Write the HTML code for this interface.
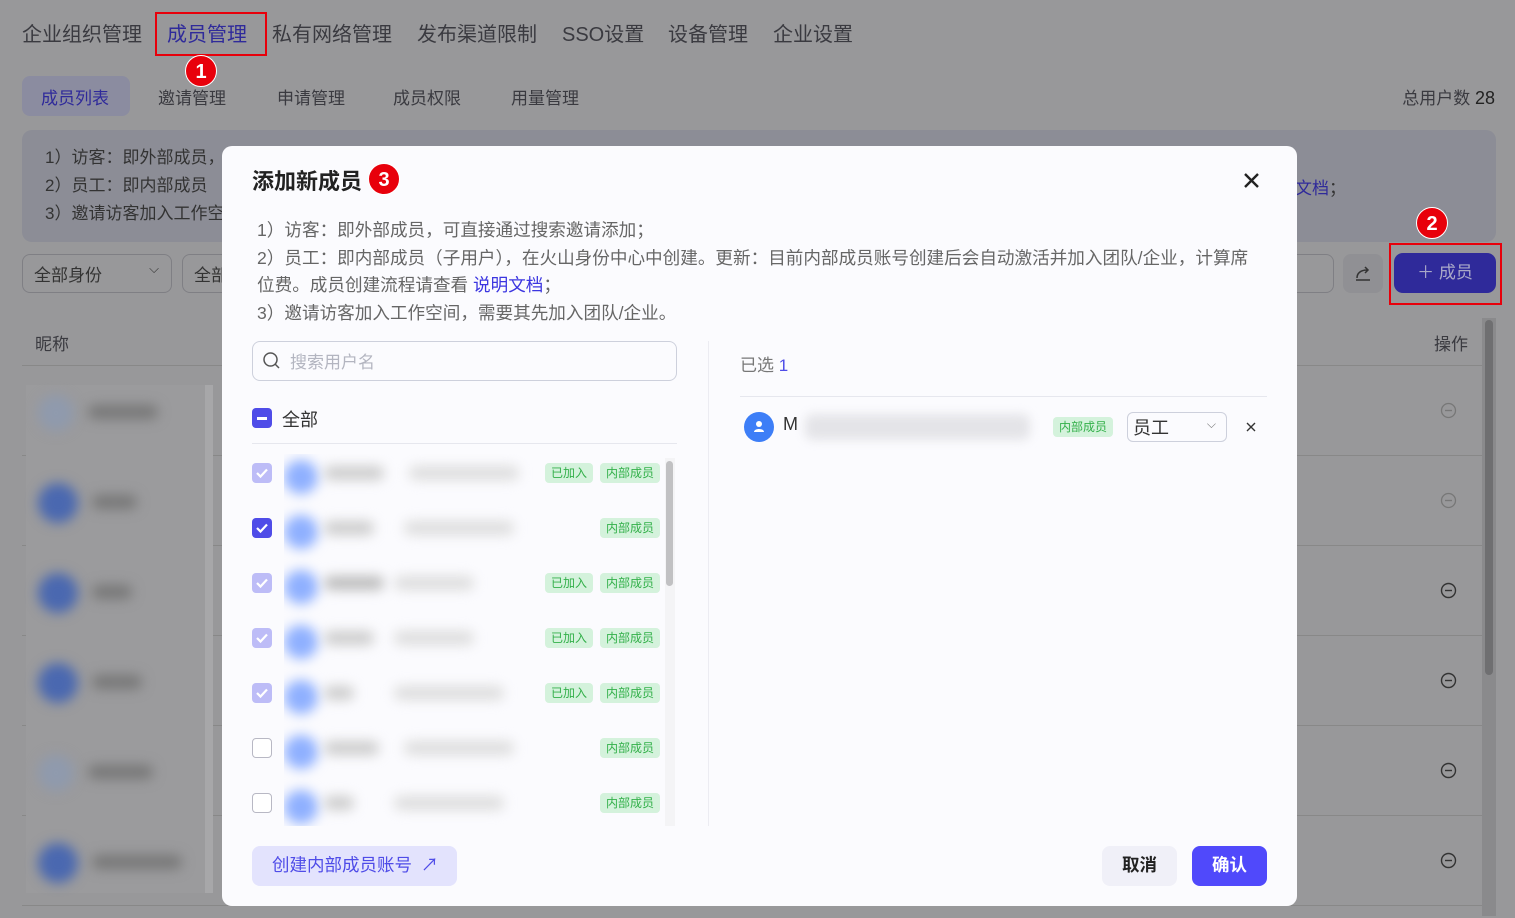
<!DOCTYPE html>
<html><head><meta charset="utf-8"><style>
*{box-sizing:border-box;margin:0;padding:0}
html,body{width:1515px;height:918px;overflow:hidden}
body{background:#98989a;font-family:"Liberation Sans","Noto Sans CJK SC",sans-serif;position:relative;color:#333}
.a{position:absolute;white-space:nowrap}
.nav{top:18px;font-size:20px;color:#3a3a40}
.sub{top:84px;font-size:17px;color:#3a3a40}
.badge{position:absolute;width:32px;height:32px;border-radius:50%;background:#e8000b;color:#fff;font-weight:bold;font-size:20px;text-align:center;line-height:32px;border:1px solid #fff}
.row{position:absolute;left:22px;width:1460px;height:90px;border-top:1px solid #888}
.blob{position:absolute;border-radius:50%;filter:blur(6px)}
.bar{position:absolute;border-radius:8px;filter:blur(6px);background:#777}
.cb{position:absolute;left:252px;width:20px;height:20px;border-radius:4px;background:#bdbcf7}
.cb svg{position:absolute;left:3px;top:4px}
.tag{position:absolute;height:20px;line-height:20px;font-size:12px;color:#33b04a;background:#d4f2dc;border-radius:4px;padding:0 6px}
.desc{left:257px;font-size:17.6px;color:#666}
</style></head><body>
<div class="a nav" style="left:22px">企业组织管理</div>
<div class="a nav" style="left:167px;color:#2f2a9a">成员管理</div>
<div class="a nav" style="left:272px">私有网络管理</div>
<div class="a nav" style="left:417px">发布渠道限制</div>
<div class="a nav" style="left:562px">SSO设置</div>
<div class="a nav" style="left:668px">设备管理</div>
<div class="a nav" style="left:773px">企业设置</div>
<div class="a" style="left:155px;top:12px;width:112px;height:44px;border:2px solid #e8000b"></div>
<div class="badge" style="left:185px;top:55px">1</div>
<div class="a" style="left:22px;top:76px;width:108px;height:40px;border-radius:8px;background:#8b8ca0"></div>
<div class="a sub" style="left:41px;color:#2f2a9a">成员列表</div>
<div class="a sub" style="left:158px">邀请管理</div>
<div class="a sub" style="left:277px">申请管理</div>
<div class="a sub" style="left:393px">成员权限</div>
<div class="a sub" style="left:511px">用量管理</div>
<div class="a" style="right:20px;top:84px;font-size:17px;color:#3a3a40">总用户数 <b style="font-weight:normal;color:#222;font-size:18px">28</b></div>
<div class="a" style="left:22px;top:130px;width:1474px;height:112px;border-radius:10px;background:#8c8d96"></div>
<div class="a" style="left:45px;top:144px;font-size:17px;color:#333;line-height:28px">1）访客：即外部成员，<br>2）员工：即内部成员<br>3）邀请访客加入工作空</div>
<div class="a" style="left:1295px;top:174px;font-size:17px;color:#2f2a9a">文档<span style="color:#333">；</span></div>
<div class="a" style="left:22px;top:254px;width:150px;height:39px;border:1px solid #7f7f84;border-radius:8px;font-size:17px;color:#333;padding:6px 11px">全部身份<span style="position:absolute;right:12px;top:6px;font-size:13px">⌵</span></div>
<div class="a" style="left:182px;top:254px;width:60px;height:39px;border:1px solid #7f7f84;border-radius:8px;font-size:17px;padding:6px 11px">全部</div>
<div class="a" style="left:1280px;top:254px;width:54px;height:39px;border:1px solid #7f7f84;border-radius:8px"></div>
<div class="a" style="left:1343px;top:254px;width:40px;height:39px;border-radius:8px;background:#909094"><svg width="40" height="39"><path d="M13 26h14M14 24c0-5 4-8 10-8M22 13l3 3-3 3" stroke="#333" stroke-width="1.5" fill="none"/></svg></div>
<div class="a" style="left:1394px;top:253px;width:102px;height:40px;border-radius:9px;background:#2f2a9a;color:#a9a8c8;font-size:17px;text-align:center;line-height:40px">＋ 成员</div>
<div class="a" style="left:1389px;top:243px;width:113px;height:62px;border:2px solid #e8000b"></div>
<div class="badge" style="left:1416px;top:207px">2</div>
<div class="a" style="left:35px;top:330px;font-size:17px;color:#3a3a40">昵称</div>
<div class="a" style="left:1434px;top:330px;font-size:17px;color:#3a3a40">操作</div>
<div class="row" style="top:365px"></div><div class="row" style="top:455px"></div><div class="row" style="top:545px"></div><div class="row" style="top:635px"></div><div class="row" style="top:725px"></div><div class="row" style="top:815px"></div><div class="row" style="top:905px;height:13px"></div>
<div class="a" style="left:26px;top:385px;width:186px;height:508px;background:#9b9b9d"></div>
<div class="a" style="left:205px;top:385px;width:8px;height:508px;background:#a7a7a9"></div>
<div class="blob" style="left:38px;top:395px;width:36px;height:36px;background:#8f9aad"></div><div class="bar" style="left:88px;top:405px;width:70px;height:14px"></div>
<div class="blob" style="left:38px;top:483px;width:40px;height:40px;background:#4a68b0"></div><div class="bar" style="left:92px;top:495px;width:45px;height:14px"></div>
<div class="blob" style="left:38px;top:573px;width:40px;height:40px;background:#4a68b0"></div><div class="bar" style="left:92px;top:585px;width:40px;height:14px"></div>
<div class="blob" style="left:38px;top:663px;width:40px;height:40px;background:#4a68b0"></div><div class="bar" style="left:92px;top:675px;width:50px;height:14px"></div>
<div class="blob" style="left:38px;top:755px;width:36px;height:36px;background:#8f9aad"></div><div class="bar" style="left:88px;top:765px;width:65px;height:14px"></div>
<div class="blob" style="left:38px;top:843px;width:40px;height:40px;background:#4a68b0"></div><div class="bar" style="left:92px;top:855px;width:90px;height:14px"></div>
<svg class="a" style="left:1440px;top:402px" width="17" height="480"><g fill="none" stroke="#777" stroke-width="1.3"><circle cx="8.5" cy="8.5" r="7"/><path d="M5 8.5h7"/><circle cx="8.5" cy="98.5" r="7"/><path d="M5 98.5h7"/></g><g fill="none" stroke="#333" stroke-width="1.4"><circle cx="8.5" cy="188.5" r="7"/><path d="M5 188.5h7"/><circle cx="8.5" cy="278.5" r="7"/><path d="M5 278.5h7"/><circle cx="8.5" cy="368.5" r="7"/><path d="M5 368.5h7"/><circle cx="8.5" cy="458.5" r="7"/><path d="M5 458.5h7"/></g></svg>
<div class="a" style="left:1482px;top:318px;width:14px;height:598px;background:#8a8a8c"></div>
<div class="a" style="left:1485px;top:320px;width:8px;height:355px;border-radius:4px;background:#6f6f71"></div>

<div class="a" style="left:222px;top:146px;width:1075px;height:760px;border-radius:10px;background:#fbfbfe"></div>
<div class="a" style="left:252px;top:164px;font-size:22px;font-weight:bold;color:#222">添加新成员</div>
<div class="badge" style="left:368px;top:163px">3</div>
<svg class="a" style="left:1243px;top:172px" width="17" height="17"><path d="M2 2L15 15M15 2L2 15" stroke="#222" stroke-width="2.4"/></svg>
<div class="a desc" style="top:217px">1）访客：即外部成员，可直接通过搜索邀请添加；</div>
<div class="a desc" style="top:245px">2）员工：即内部成员（子用户），在火山身份中心中创建。更新：目前内部成员账号创建后会自动激活并加入团队/企业，计算席</div>
<div class="a desc" style="top:272px">位费。成员创建流程请查看 <span style="color:#3b35e0">说明文档</span>；</div>
<div class="a desc" style="top:300px">3）邀请访客加入工作空间，需要其先加入团队/企业。</div>
<div class="a" style="left:252px;top:341px;width:425px;height:40px;border:1px solid #cdd0dc;border-radius:8px"></div>
<svg class="a" style="left:262px;top:351px" width="20" height="20"><circle cx="8.5" cy="8.5" r="6.5" stroke="#555" stroke-width="1.5" fill="none"/><path d="M13 13l4 4" stroke="#555" stroke-width="1.5"/></svg>
<div class="a" style="left:290px;top:348px;font-size:17px;color:#b3b5c0">搜索用户名</div>
<div class="a" style="left:252px;top:408px;width:20px;height:20px;border-radius:4px;background:#4f4ce8"><div style="position:absolute;left:5px;top:9px;width:10px;height:2.5px;background:#fff"></div></div>
<div class="a" style="left:282px;top:406px;font-size:18px;color:#333">全部</div>
<div class="a" style="left:252px;top:443px;width:425px;height:1px;background:#e6e7ee"></div>
<div class="a" style="left:708px;top:341px;width:1px;height:485px;background:#ececf2"></div>
<div class="a" style="left:665px;top:458px;width:10px;height:368px;background:#f4f4f6"></div>
<div class="a" style="left:666px;top:461px;width:7px;height:125px;border-radius:4px;background:#c1c1c3"></div>
<div class="a" style="left:284px;top:454px;width:250px;height:372px;overflow:hidden">
 <div class="blob" style="left:0px;top:6px;width:34px;height:34px;background:#8fb0ff"></div><div class="bar" style="left:40px;top:12px;width:60px;height:14px;background:#ccc"></div><div class="bar" style="left:125px;top:12px;width:110px;height:14px;background:#ddd"></div>
 <div class="blob" style="left:0px;top:61px;width:34px;height:34px;background:#8fb0ff"></div><div class="bar" style="left:40px;top:67px;width:50px;height:14px;background:#ccc"></div><div class="bar" style="left:120px;top:67px;width:110px;height:14px;background:#ddd"></div>
 <div class="blob" style="left:0px;top:116px;width:34px;height:34px;background:#8fb0ff"></div><div class="bar" style="left:40px;top:122px;width:60px;height:14px;background:#bbb"></div><div class="bar" style="left:110px;top:122px;width:80px;height:14px;background:#ddd"></div>
 <div class="blob" style="left:0px;top:171px;width:34px;height:34px;background:#8fb0ff"></div><div class="bar" style="left:40px;top:177px;width:50px;height:14px;background:#ccc"></div><div class="bar" style="left:110px;top:177px;width:80px;height:14px;background:#ddd"></div>
 <div class="blob" style="left:0px;top:226px;width:34px;height:34px;background:#8fb0ff"></div><div class="bar" style="left:40px;top:232px;width:30px;height:14px;background:#ccc"></div><div class="bar" style="left:110px;top:232px;width:110px;height:14px;background:#ddd"></div>
 <div class="blob" style="left:0px;top:281px;width:34px;height:34px;background:#8fb0ff"></div><div class="bar" style="left:40px;top:287px;width:55px;height:14px;background:#ccc"></div><div class="bar" style="left:120px;top:287px;width:110px;height:14px;background:#ddd"></div>
 <div class="blob" style="left:0px;top:336px;width:34px;height:34px;background:#8fb0ff"></div><div class="bar" style="left:40px;top:342px;width:30px;height:14px;background:#ccc"></div><div class="bar" style="left:110px;top:342px;width:110px;height:14px;background:#ddd"></div>
</div>
<div class="cb" style="top:463px"><svg width="14" height="12"><path d="M2 6l3.5 3.5L12 2.5" stroke="#fff" stroke-width="2.2" fill="none"/></svg></div>
<div class="cb" style="top:518px;background:#4f4ce8"><svg width="14" height="12"><path d="M2 6l3.5 3.5L12 2.5" stroke="#fff" stroke-width="2.2" fill="none"/></svg></div>
<div class="cb" style="top:573px"><svg width="14" height="12"><path d="M2 6l3.5 3.5L12 2.5" stroke="#fff" stroke-width="2.2" fill="none"/></svg></div>
<div class="cb" style="top:628px"><svg width="14" height="12"><path d="M2 6l3.5 3.5L12 2.5" stroke="#fff" stroke-width="2.2" fill="none"/></svg></div>
<div class="cb" style="top:683px"><svg width="14" height="12"><path d="M2 6l3.5 3.5L12 2.5" stroke="#fff" stroke-width="2.2" fill="none"/></svg></div>
<div class="cb" style="top:738px;background:#fff;border:1px solid #b8b8c4"></div>
<div class="cb" style="top:793px;background:#fff;border:1px solid #b8b8c4"></div>
<div class="tag" style="left:545px;top:463px">已加入</div><div class="tag" style="left:600px;top:463px">内部成员</div>
<div class="tag" style="left:600px;top:518px">内部成员</div>
<div class="tag" style="left:545px;top:573px">已加入</div><div class="tag" style="left:600px;top:573px">内部成员</div>
<div class="tag" style="left:545px;top:628px">已加入</div><div class="tag" style="left:600px;top:628px">内部成员</div>
<div class="tag" style="left:545px;top:683px">已加入</div><div class="tag" style="left:600px;top:683px">内部成员</div>
<div class="tag" style="left:600px;top:738px">内部成员</div>
<div class="tag" style="left:600px;top:793px">内部成员</div>
<div class="a" style="left:740px;top:351px;font-size:17px;color:#777">已选 <span style="color:#4f4ce8">1</span></div>
<div class="a" style="left:740px;top:396px;width:527px;height:1px;background:#e6e7ee"></div>
<div class="a" style="left:744px;top:412px;width:30px;height:30px;border-radius:50%;background:#3d7ef7"><svg width="30" height="30"><circle cx="15" cy="12" r="3" fill="#fff"/><path d="M10 20c0-4 10-4 10 0z" fill="#fff"/></svg></div>
<div class="a" style="left:783px;top:414px;font-size:18px;color:#333">M</div>
<div class="bar" style="left:805px;top:414px;width:225px;height:26px;background:#e4e4e8;filter:blur(5px)"></div>
<div class="tag" style="left:1053px;top:417px">内部成员</div>
<div class="a" style="left:1127px;top:412px;width:100px;height:30px;border:1px solid #cdd0dc;border-radius:6px;font-size:18px;padding:1px 5px;color:#333">员工<span style="position:absolute;right:10px;top:4px;font-size:12px;color:#777">⌵</span></div>
<svg class="a" style="left:1246px;top:422px" width="10" height="10"><path d="M1 1L9 9M9 1L1 9" stroke="#333" stroke-width="1.4"/></svg>
<div class="a" style="left:252px;top:846px;width:205px;height:40px;border-radius:8px;background:#e3e3fd;color:#4f4ce8;font-size:17.5px;line-height:38px;padding-left:20px">创建内部成员账号 <span style="margin-left:4px">↗</span></div>
<div class="a" style="left:1102px;top:846px;width:75px;height:40px;border-radius:8px;background:#f0f0f8;color:#222;font-size:17.5px;font-weight:bold;line-height:38px;text-align:center">取消</div>
<div class="a" style="left:1192px;top:846px;width:75px;height:40px;border-radius:8px;background:#5049fb;color:#fff;font-size:17.5px;font-weight:bold;line-height:38px;text-align:center">确认</div>
</body></html>
